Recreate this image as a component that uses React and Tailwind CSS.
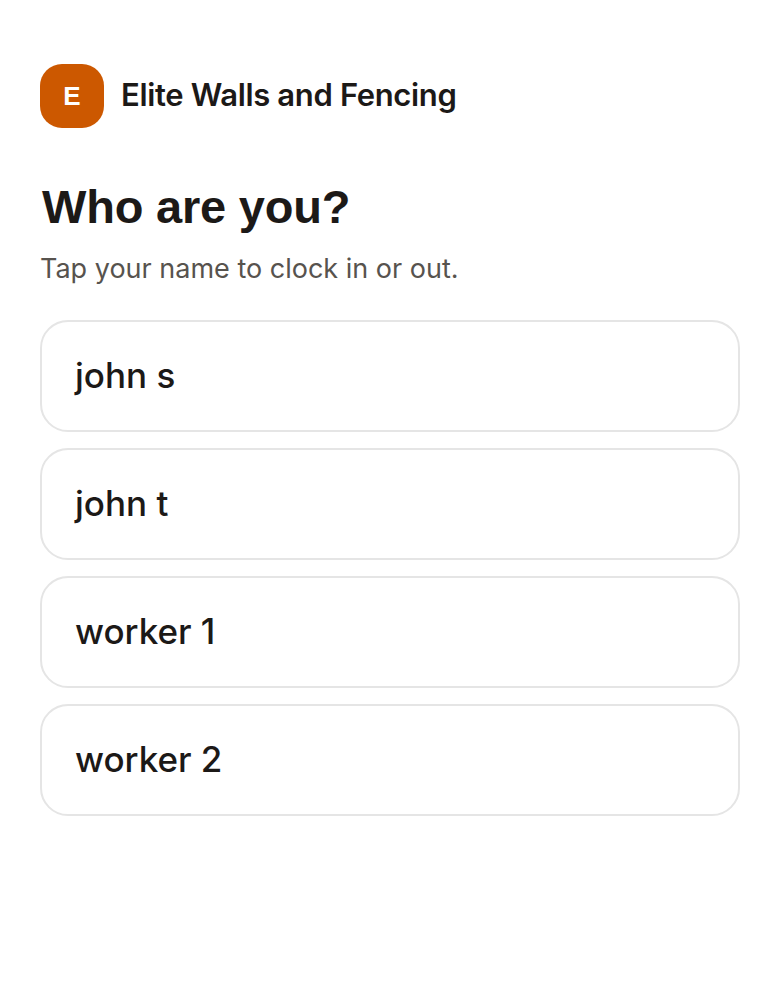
const workers = ["john s", "john t", "worker 1", "worker 2"];

export default function App() {
  return (
    <div className="min-h-[1000px] bg-white px-10 pt-16 font-['Inter',sans-serif] text-[#1c1917]">
      <div className="flex items-center gap-[17px]">
        <div className="flex h-16 w-16 items-center justify-center rounded-[22px] bg-[#cc5800] font-['Liberation_Sans',sans-serif] text-[26px] font-bold text-white">E</div>
        <div className="pb-0.5 text-[31px] font-semibold tracking-[-0.35px]">Elite Walls and Fencing</div>
      </div>
      <h1 className="mt-[51px] pl-0.5 font-['Liberation_Sans',sans-serif] text-[47px] leading-[56px] font-bold tracking-[-0.2px]">Who are you?</h1>
      <p className="mt-4 text-[27px] leading-9 text-[#57534e]">Tap your name to clock in or out.</p>
      <div className="mt-[33px] flex flex-col gap-4">
        {workers.map((name) => (
          <button key={name} className="h-28 rounded-[28px] border-2 border-[#e5e5e5] bg-white px-[33px] pb-0.5 text-left text-[35px] font-medium">{name}</button>
        ))}
      </div>
    </div>
  );
}
